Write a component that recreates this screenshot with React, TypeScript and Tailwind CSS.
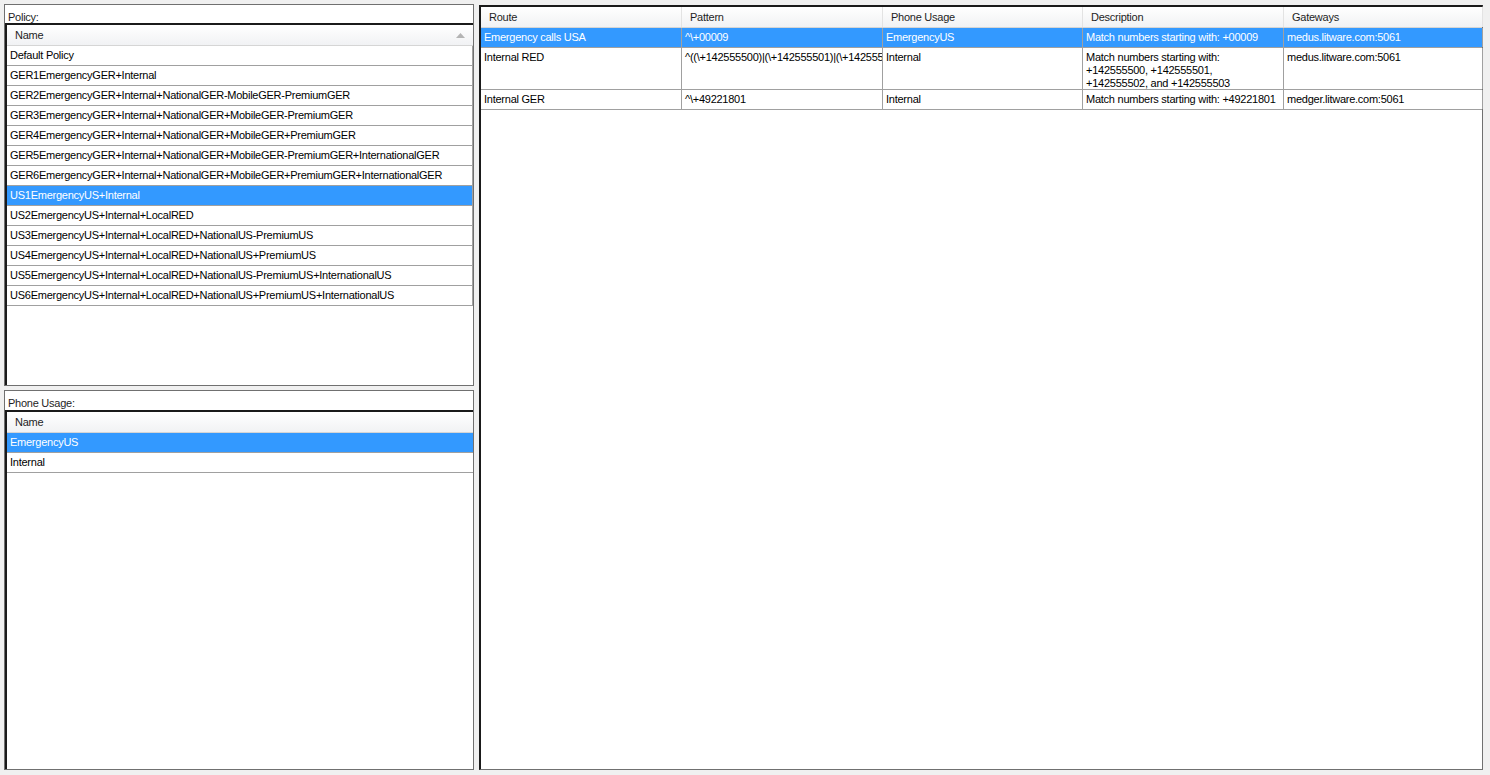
const policies = [
  'Default Policy',
  'GER1EmergencyGER+Internal',
  'GER2EmergencyGER+Internal+NationalGER-MobileGER-PremiumGER',
  'GER3EmergencyGER+Internal+NationalGER+MobileGER-PremiumGER',
  'GER4EmergencyGER+Internal+NationalGER+MobileGER+PremiumGER',
  'GER5EmergencyGER+Internal+NationalGER+MobileGER-PremiumGER+InternationalGER',
  'GER6EmergencyGER+Internal+NationalGER+MobileGER+PremiumGER+InternationalGER',
  'US1EmergencyUS+Internal',
  'US2EmergencyUS+Internal+LocalRED',
  'US3EmergencyUS+Internal+LocalRED+NationalUS-PremiumUS',
  'US4EmergencyUS+Internal+LocalRED+NationalUS+PremiumUS',
  'US5EmergencyUS+Internal+LocalRED+NationalUS-PremiumUS+InternationalUS',
  'US6EmergencyUS+Internal+LocalRED+NationalUS+PremiumUS+InternationalUS',
];

const usages = ['EmergencyUS', 'Internal'];

const columns = [
  { name: 'Route', w: 'w-[201px]' },
  { name: 'Pattern', w: 'w-[201px]' },
  { name: 'Phone Usage', w: 'w-[200px]' },
  { name: 'Description', w: 'w-[201px]' },
  { name: 'Gateways', w: 'w-[199px]' },
];

// each cell is a list of lines, wrapped the way the grid wraps them
const routes = [
  {
    cells: [['Emergency calls USA'], ['^\\+00009'], ['EmergencyUS'], ['Match numbers starting with: +00009'], ['medus.litware.com:5061']],
    tall: false,
    selected: true,
  },
  {
    cells: [
      ['Internal RED'],
      ['^((\\+142555500)|(\\+142555501)|(\\+142555502)|(\\+142555503))'],
      ['Internal'],
      ['Match numbers starting with:', '+142555500, +142555501,', '+142555502, and +142555503'],
      ['medus.litware.com:5061'],
    ],
    tall: true,
    selected: false,
  },
  {
    cells: [['Internal GER'], ['^\\+49221801'], ['Internal'], ['Match numbers starting with: +49221801'], ['medger.litware.com:5061']],
    tall: false,
    selected: false,
  },
];

const ListHeader = ({ sort }: { sort?: boolean }) => (
  <div className="h-[21px] flex items-center justify-between pl-[8px] pr-[8px] bg-gradient-to-b from-white to-[#f1f2f4] border-b border-[#d5d5d5] text-[#1e1e1e]">
    <span>Name</span>
    {sort && (
      <svg width="9" height="5" viewBox="0 0 9 5">
        <path d="M0 5 L4.5 0 L9 5 Z" fill="#b4b4b4" />
      </svg>
    )}
  </div>
);

const NameList = ({ items, selected, sort }: { items: string[]; selected: string; sort?: boolean }) => (
  <div className="flex-1 border-t-2 border-l-2 border-t-[#1a1a1a] border-l-[#1a1a1a] bg-white overflow-hidden">
    <ListHeader sort={sort} />
    {items.map((name) => {
      const sel = name === selected;
      const width = sort ? 'w-[466px] border-r' : 'w-full';
      return (
        <div
          key={name}
          className={
            sel
              ? `h-[20px] flex items-center pl-[3px] bg-[#3399ff] text-white border-b border-[#a0a0a0] ${width}`
              : `h-[20px] flex items-center pl-[3px] text-black border-b border-[#a0a0a0] ${width}`
          }
        >
          {name}
        </div>
      );
    })}
  </div>
);

const App = () => {
  return (
    <div
      className="w-[1490px] h-[775px] bg-[#f0f0f0] flex text-[11px] leading-[13px] tracking-[-0.25px] overflow-hidden"
      style={{ fontFamily: '"Liberation Sans", Arial, sans-serif' }}
    >
      <div className="ml-[4px] mt-[4px] w-[470px] flex flex-col gap-[4px]">
        <div className="h-[382px] bg-white border border-[#707070] flex flex-col">
          <div className="h-[18px] pl-[3px] pt-[6px] text-[#1e1e1e]">Policy:</div>
          <NameList items={policies} selected="US1EmergencyUS+Internal" sort />
        </div>
        <div className="h-[380px] bg-white border border-[#707070] flex flex-col">
          <div className="h-[19px] pl-[3px] pt-[6px] text-[#1e1e1e]">Phone Usage:</div>
          <NameList items={usages} selected="EmergencyUS" />
        </div>
      </div>

      <div className="ml-[5px] mt-[5px] w-[1004px] h-[765px] bg-white border border-[#707070] border-t-2 border-l-2 border-t-[#1a1a1a] border-l-[#1a1a1a] flex flex-col">
        <div className="h-[21px] flex bg-gradient-to-b from-white to-[#f1f2f4] border-b border-[#d5d5d5] text-[#1e1e1e]">
          {columns.map((c) => (
            <div key={c.name} className={`${c.w} shrink-0 pl-[8px] flex items-center border-r border-[#e3e3e3]`}>
              {c.name}
            </div>
          ))}
        </div>
        {routes.map((r) => (
          <div
            key={r.cells[0][0]}
            className={
              r.selected
                ? 'flex bg-[#3399ff] text-white border-b border-[#a0a0a0]'
                : 'flex text-black border-b border-[#a0a0a0]'
            }
          >
            {r.cells.map((lines, i) => (
              <div
                key={i}
                className={`${columns[i].w} ${r.tall ? 'h-[41px]' : 'h-[19px]'} shrink-0 pl-[3px] pt-[3px] border-r border-[#a0a0a0] overflow-hidden whitespace-nowrap`}
              >
                {lines.map((l) => (
                  <div key={l}>{l}</div>
                ))}
              </div>
            ))}
          </div>
        ))}
      </div>
    </div>
  );
};

export default App;
